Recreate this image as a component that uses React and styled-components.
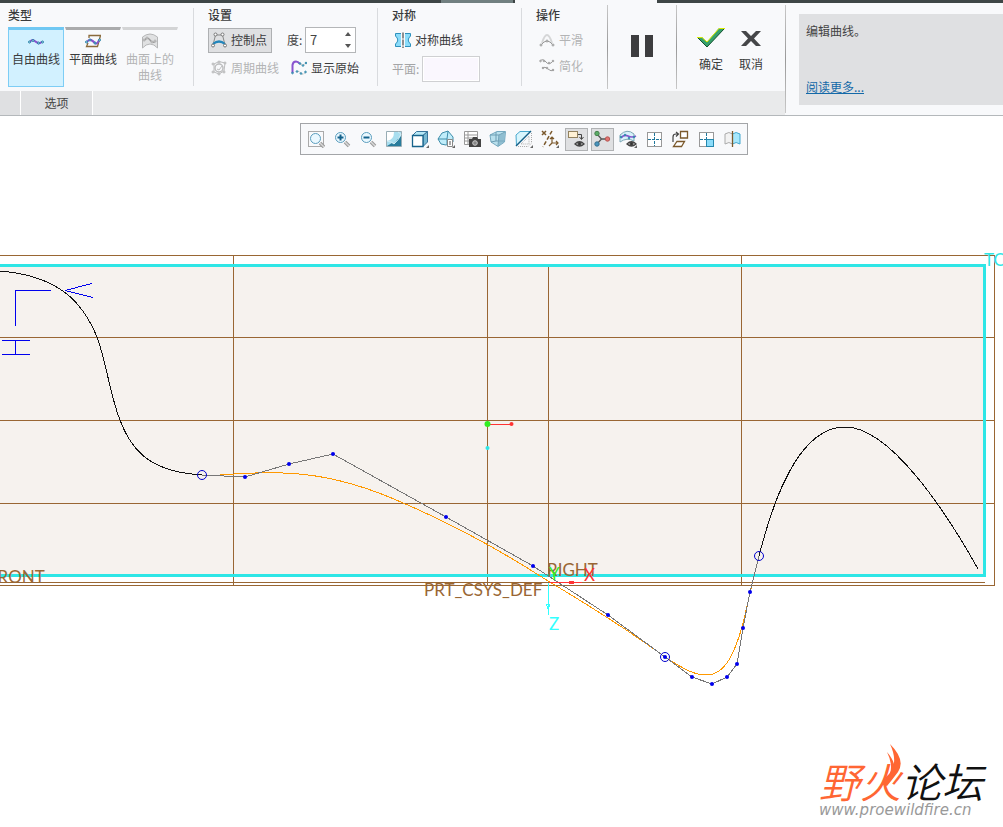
import React from "react";
import styled, { createGlobalStyle } from "styled-components";

const GlobalStyle = createGlobalStyle`
  * {
    box-sizing: border-box;
  }
  body {
    margin: 0;
    background: #fff;
    color: #444;
    font-family: "Noto Sans CJK SC", sans-serif;
    font-size: 12px;
    line-height: 16px;
  }
  button, input {
    font: inherit;
    color: inherit;
  }
`;

const Page = styled.div`
  overflow: hidden;
`;

const Ribbon = styled.header`
  background: #f8f9fb;
  border-bottom: 1px solid #b4b8bb;
`;

const TabStrip = styled.div`
  display: flex;
  height: 3px;
`;

const TabPiece = styled.div`
  flex: ${(p) => (p.$width ? `0 0 ${p.$width}px` : "1")};
  background: ${(p) => p.$color};
`;

const RibbonBody = styled.div`
  display: flex;
`;

const RibbonMain = styled.div`
  flex: none;
`;

const Groups = styled.div`
  display: flex;
  height: 88px;
`;

const Group = styled.section`
  width: ${(p) => p.$width}px;
  padding: 4px 0 0 ${(p) => p.$pad || 14}px;
`;

const Title = styled.h2`
  margin: 0 0 4px;
  font-size: 12px;
  line-height: 16px;
  font-weight: 500;
  color: #3a3b3c;
`;

const Separator = styled.div`
  flex: none;
  width: 1px;
  margin: ${(p) => (p.$strong ? "2px 0" : "5px 0")};
  background: ${(p) =>
    p.$strong ? "linear-gradient(#c8c8c8, #999, #c8c8c8)" : "#d9dbde"};
`;

const TypeList = styled.div`
  display: flex;
  gap: 1px;
`;

const TypeButton = styled.button`
  width: 56px;
  height: 60px;
  padding: 3px 0 0;
  display: flex;
  flex-direction: column;
  align-items: center;
  gap: 2px;
  background: ${(p) => (p.$active ? "#d2f1ff" : "none")};
  border: 1px solid ${(p) => (p.$active ? "#7dcdf5" : "transparent")};
  border-top: 3px solid
    ${(p) => (p.$active ? "#70c8f3" : p.disabled ? "#d3d4d5" : "#aaabac")};
  color: ${(p) => (p.disabled ? "#b3b4b5" : "#3a3b3c")};
  svg {
    flex: none;
  }
`;

const Row = styled.div`
  display: flex;
  align-items: center;
  gap: 4px;
  height: 26px;
  margin-top: ${(p) => p.$top || 0}px;
`;

const Command = styled.button`
  display: flex;
  align-items: center;
  gap: 4px;
  height: 25px;
  padding: 0 4px 0 2px;
  white-space: nowrap;
  background: ${(p) => (p.$active ? "#dfe0e2" : "none")};
  border: 1px solid ${(p) => (p.$active ? "#aeb0b2" : "transparent")};
  color: ${(p) => (p.disabled ? "#b3b4b5" : "#3a3b3c")};
`;

const FieldLabel = styled.label`
  color: ${(p) => (p.$muted ? "#a4a5a6" : "#444")};
  margin-left: ${(p) => p.$left || 0}px;
  width: ${(p) => p.$width}px;
  white-space: nowrap;
`;

const Spinner = styled.div`
  display: flex;
  width: 51px;
  height: 26px;
  background: #fff;
  border: 1px solid #b4b6b8;
`;

const SpinnerInput = styled.input`
  width: 34px;
  padding: 0 4px;
  border: 0;
  background: none;
  font-size: 13px;
`;

const SpinnerArrows = styled.div`
  display: flex;
  flex-direction: column;
  button {
    width: 15px;
    height: 12px;
    padding: 0;
    border: 0;
    background: none;
    display: flex;
    align-items: center;
    justify-content: center;
  }
`;

const PlaneInput = styled.input`
  width: 58px;
  height: 26px;
  border: 1px solid #cfd0d2;
  outline: 1px solid #fff;
  outline-offset: -2px;
  background: #faf7fe;
`;

const PauseButton = styled.button`
  width: 68px;
  padding: 0;
  border: 0;
  background: none;
`;

const Decision = styled.div`
  display: flex;
  width: 108px;
  padding: 21px 0 0 14px;
`;

const DecisionButton = styled.button`
  width: 40px;
  height: 50px;
  padding: 0;
  border: 0;
  background: none;
  display: flex;
  flex-direction: column;
  align-items: center;
  gap: 4px;
  color: #3a3b3c;
`;

const OptionBar = styled.nav`
  display: flex;
  gap: 1px;
  height: 24px;
  background: #e9eaeb;
`;

const OptionTab = styled.button`
  width: ${(p) => p.$width}px;
  padding: 0;
  border: 0;
  background: #dfe0e2;
  box-shadow: 1px 0 #fff;
`;

const Help = styled.aside`
  flex: 1;
  min-width: 0;
  margin: 11px 0 10px 13px;
  padding: 9px 7px 10px;
  display: flex;
  flex-direction: column;
  justify-content: space-between;
  align-items: flex-start;
  background: #dfe0e2;
  p {
    margin: 0;
  }
  a {
    color: #1469a8;
  }
`;

const Workspace = styled.main`
  position: relative;
  padding-top: 7px;
`;

const ViewBar = styled.div`
  display: flex;
  gap: 3px;
  width: max-content;
  height: 32px;
  margin: 0 0 1px 300px;
  padding: 4px 3px 3px 4px;
  border: 1px solid #a3a5a8;
  background: #f8f9fb;
`;

const ViewButton = styled.button`
  width: 23px;
  height: 23px;
  padding: 0 1px 1px 0;
  display: flex;
  align-items: center;
  justify-content: center;
  border: 1px solid ${(p) => (p.$active ? "#b0b2b4" : "transparent")};
  background: ${(p) => (p.$active ? "#dfe0e2" : "none")};
`;

const Sketch = styled.svg`
  display: block;
  width: 100%;
  height: auto;
  shape-rendering: crispEdges;
  fill: none;
  text {
    font-family: Lato, "Open Sans", sans-serif;
    font-size: 17px;
  }
`;

const Watermark = styled.div`
  position: absolute;
  right: 20px;
  bottom: 8px;
`;

const WatermarkName = styled.div`
  display: flex;
  font-size: 41px;
  line-height: 42px;
  font-style: italic;
  font-weight: 350;
  color: #111;
  b {
    font-weight: 350;
    color: #ff6633;
  }
  svg {
    position: absolute;
    top: -17px;
    left: 63px;
  }
`;

const WatermarkSite = styled.div`
  font-family: "DejaVu Sans", sans-serif;
  font-style: italic;
  font-size: 15px;
  line-height: 18px;
  color: #999;
`;

const Glyph = ({ children, w = 16, h = 16, ...rest }) => (
  <svg
    width={w}
    height={h}
    viewBox={`0 0 ${w} ${h}`}
    fill="none"
    stroke="#39749b"
    aria-hidden="true"
    {...rest}
  >
    {children}
  </svg>
);

const Corner = () => <path d="M18 15v3h-3z" fill="#666" stroke="none" />;

const Eye = ({ x, y }) => (
  <g transform={`translate(${x} ${y})`} stroke="#444" strokeWidth="1.3">
    <path d="M0 3Q4.500-1.500 9 3Q4.500 7 0 3Z" fill="#fff" />
    <circle cx="4.500" cy="2.800" r="1.500" fill="#333" />
  </g>
);

const Nodes = ({ points, r = 1.3, color, fill = "#d9f5ff" }) =>
  points.map(([x, y]) => (
    <circle key={`${x}-${y}`} cx={x} cy={y} r={r} fill={fill} stroke={color} />
  ));

const FreeCurve = () => (
  <Glyph>
    <path d="M2 9Q4 6 6 7.500T10 10T14 8.500" stroke="#8a54cf" strokeWidth="2" />
    <Nodes points={[[1.5, 9], [5, 7.5], [10.5, 10], [14.5, 9]]} r={1} color="#187aa0" />
  </Glyph>
);

const PlaneCurve = () => (
  <Glyph>
    <path d="M4 5V2.500H15.500L12.500 13.500H1.500L3 10" stroke="#8a6a3a" strokeWidth="1.300" />
    <path d="M2 9Q4 6 6 7T10 10T14 7" stroke="#8a54cf" strokeWidth="2" />
    <Nodes points={[[1.5, 9], [5, 7], [10, 10], [14.5, 7]]} r={1} color="#187aa0" />
  </Glyph>
);

const SurfaceCurve = () => (
  <Glyph w={18} stroke="#b5b6b7">
    <path d="M1.500 4Q9-2 16.500 4V15Q13 11 9 11T1.500 15Z" fill="#e0e1e2" />
    <path d="M3 8Q6 3 9 7T15 8" stroke="#999" strokeWidth="1.300" />
    <Nodes points={[[3, 7], [6, 5], [11, 9], [14, 8]]} r={1} color="#aaa" fill="#eee" />
  </Glyph>
);

const ControlPoint = () => (
  <Glyph stroke="#888">
    <path d="M2 13L4.500 3H11.500L14 13" />
    <path d="M2 12Q8 7 14 12" stroke="#2386bb" strokeWidth="2.200" />
    <Nodes points={[[2, 13.5], [4.5, 2.5], [11.5, 2.5], [14, 13.5]]} r={1.5} color="#777" fill="#fff" />
  </Glyph>
);

const PeriodicCurve = () => (
  <Glyph stroke="#bcbdbe">
    <path d="M3 4L8 1.500L14 3L13 11L8 14L3 12Z" />
    <circle cx="8" cy="8" r="4" strokeWidth="1.500" />
    <path d="M6 9l2 1 3-4" />
    <Nodes points={[[2, 4], [8, 2], [14, 3], [13, 12], [8, 14], [2, 12]]} r={1} color="#b5b6b7" fill="#eee" />
  </Glyph>
);

const ShowOriginal = () => (
  <Glyph>
    <path d="M1.500 13V5Q2 1.500 5 1.500Q7 1.500 9 4" stroke="#8a54cf" strokeWidth="2" />
    <path d="M9 4Q12 6 15 3M6 12Q8 10 9.500 13T15 12" stroke="#bbb" strokeDasharray="2 1" />
    <Nodes points={[[1.5, 13], [9, 3.5], [12, 5.5], [15, 3], [6, 11.5], [10, 13.5], [14.5, 12]]} r={0.8} color="#187aa0" />
  </Glyph>
);

const Symmetric = () => (
  <Glyph stroke="#2e91bd">
    <path d="M0.500 1.500H6V14.500H0.500V12Q5 8 0.500 4Z" fill="#8bdcfa" stroke="none" />
    <path d="M15.500 1.500H10V14.500H15.500V12Q11 8 15.500 4Z" fill="#8bdcfa" stroke="none" />
    <path d="M6 1.500H0.500V4Q5 8 0.500 12V14.500H6M10 1.500H15.500V4Q11 8 15.500 12V14.500H10" />
    <path d="M8 0.500V16" stroke="#222" strokeDasharray="6 1" />
  </Glyph>
);

const Smooth = () => (
  <Glyph stroke="#bcbdbe">
    <path d="M3 11Q8-5 13 11" stroke="#d5d6d7" strokeWidth="2" />
    <path d="M2 13Q8 5 14 13" stroke="#999" />
    <Nodes points={[[2, 13], [8, 9], [14, 13]]} r={1} color="#999" fill="#eee" />
  </Glyph>
);

const Simplify = () => (
  <Glyph stroke="#999">
    <path d="M1 3Q4 0 7 4T14 3M3 10Q6 8 9 11T15 12" />
    <Nodes points={[[1.5, 3], [5, 3], [10, 5], [14, 3], [4, 10], [8, 10], [14, 12]]} r={0.8} color="#999" fill="#eee" />
  </Glyph>
);

const Magnifier = ({ sign }) => (
  <>
    <path d="M12 12L16 16" stroke="#9a9a9a" strokeWidth="3.500" />
    <path d="M12 12L16 16" stroke="#d9d9d9" strokeWidth="1.500" />
    <circle cx="7.500" cy="7.500" r="5" fill="#eaf8ff" stroke="#5a9dbd" />
    {sign && <path d={sign} stroke="#14628c" strokeWidth="2" />}
  </>
);

const viewTools = [
  {
    name: "重新调整",
    icon: (
      <>
        <rect x="1.500" y="1.500" width="15" height="15" stroke="#aaa" />
        <g transform="translate(1 1)">
          <Magnifier />
        </g>
      </>
    ),
  },
  { name: "放大", icon: <Magnifier sign="M4.500 7.500h6M7.500 4.500v6" /> },
  { name: "缩小", icon: <Magnifier sign="M4.500 7.500h6" /> },
  {
    name: "重画",
    icon: (
      <>
        <path d="M1.500 1.500H16.500V16.500H1.500Z" fill="#a8deef" stroke="#99adb5" />
        <path d="M2 2H9Q9 10 2 11Z" fill="#fff" stroke="none" />
        <path d="M2 16L7 13Q9 15 12 10L16 6V16Z" fill="#287c9c" stroke="none" />
        <path d="M2 11Q8 12 9 14Q14 10 16 4L13 2" stroke="#d3edf5" />
      </>
    ),
  },
  {
    name: "显示样式",
    icon: (
      <>
        <path d="M1.500 5.500L5.500 1.500H16.500L12 5.500Z" fill="#b8e8f6" />
        <path d="M12 5.500L16.500 1.500V12L12 16.500Z" fill="#78b9d2" />
        <path d="M1.500 5.500H12V16.500H1.500Z" fill="#fff" stroke="#17638b" strokeWidth="1.300" />
        <Corner />
      </>
    ),
  },
  {
    name: "已保存方向",
    icon: (
      <>
        <path d="M1 9L5 3L11 1L16 7V12L9 15L4 14Z" fill="#c0edfa" stroke="#3e8daa" />
        <path d="M1 9H10V14M10 9L11 1" fill="none" stroke="#3e8daa" />
        <path d="M10.500 9.500H15.500V16.500H10.500Z" fill="#fff" stroke="#888" />
        <path d="M12 12h2M12 14h2" stroke="#555" />
        <Corner />
      </>
    ),
  },
  {
    name: "视图管理器",
    icon: (
      <>
        <path d="M1.500 1.500H14.500V14.500H1.500ZM1 5H15M1 8H15M1 11H15M5 1V15" stroke="#999" fill="#fff" />
        <path d="M6 9h3l1-2h4l1 2h3v8H6Z" fill="#444" stroke="none" />
        <circle cx="12" cy="13" r="2.300" fill="#888" stroke="#ccc" />
      </>
    ),
  },
  {
    name: "透视图",
    icon: (
      <>
        <path d="M1 5L8 1.500H16.500L15.500 12L9 16.500L2 12Z" fill="#b9e0ed" stroke="#74a9c0" />
        <path d="M1 5H10L9 16M10 5L16 2M7 2V11L2 12M7 11H15" stroke="#6c9db3" />
        <path d="M10 5L16 2L15 12L9 16Z" fill="#7eafc5" stroke="none" opacity="0.700" />
      </>
    ),
  },
  {
    name: "截面",
    icon: (
      <>
        <path d="M1 5L5 1.500H15.500L1.500 15.500Z" fill="#d8f5fd" stroke="#49a8ce" />
        <path d="M16.500 3V13L13 16.500H3M6 14L14 6V14Z" stroke="#aaa" strokeDasharray="1 1" />
        <path d="M1 16L16 1" stroke="#155f85" strokeWidth="1.500" />
        <Corner />
      </>
    ),
  },
  {
    name: "基准显示过滤器",
    icon: (
      <>
        <g stroke="#7b592c" strokeWidth="1.500">
          <path d="M1 1l4 4M5 1L1 5" />
          <path d="M11 1L2 17" strokeDasharray="4 2" />
          <path d="M11 7v6h6M9 9l2-2 2 2M15 11l2 2-2 2M11 13l-3 3" strokeWidth="1.200" />
        </g>
        <Corner />
      </>
    ),
  },
  {
    name: "注释显示",
    active: true,
    icon: (
      <>
        <rect x="1.500" y="1.500" width="9" height="6" fill="#fff1d5" stroke="#93825f" />
        <path d="M11 4.500H14.500V9M12.500 7L14.500 9.500L16.500 7" stroke="#444" />
        <Eye x={8} y={11} />
      </>
    ),
  },
  {
    name: "旋转中心",
    active: true,
    icon: (
      <>
        <path d="M4 4L8.500 9L4 14M8 9H14" stroke="#555" strokeWidth="1.300" />
        <circle cx="4" cy="3.500" r="2.200" fill="#5aac66" stroke="#47814e" />
        <circle cx="4" cy="14" r="2.200" fill="#4894bc" stroke="#35708f" />
        <circle cx="14.500" cy="9" r="2.200" fill="#e17370" stroke="#b65552" />
      </>
    ),
  },
  {
    name: "显示曲线",
    icon: (
      <>
        <path d="M1 5Q8-2 15 4V11Q8 7 1 12Z" fill="#d8f2fb" stroke="#7ea7b5" />
        <path d="M2 8Q5 4 9 6T17 6" stroke="#8a54cf" strokeWidth="1.700" />
        <Nodes points={[[2, 7], [6, 5], [10, 8], [15, 7]]} r={0.8} color="#197da4" />
        <Eye x={8} y={11} />
        <Corner />
      </>
    ),
  },
  {
    name: "四视图",
    icon: (
      <>
        <rect x="2.500" y="2.500" width="14" height="14" fill="#fff" stroke="#999" />
        <path d="M9.500 3V16M3 9.500H16" strokeDasharray="3 1" stroke="#20779c" />
      </>
    ),
  },
  {
    name: "平面方向",
    icon: (
      <>
        <path d="M9.500 1.500H16.500V8H9.500ZM6 11.500H13.500L10.500 16.500H2.500Z" fill="#fff" stroke="#7b592c" strokeWidth="1.300" />
        <path d="M2 12V7Q2 4 5 4H7M5 2L7.500 4L5 6.500" stroke="#444" strokeWidth="1.200" />
      </>
    ),
  },
  {
    name: "活动视图",
    icon: (
      <>
        <rect x="2.500" y="2.500" width="14" height="14" fill="#fff" stroke="#999" />
        <path d="M9.500 3V16M3 9.500H16" strokeDasharray="3 1" stroke="#20779c" />
        <rect x="9.500" y="9.500" width="7" height="7" fill="#8bdcfa" stroke="#2588ae" />
      </>
    ),
  },
  {
    name: "对称显示",
    icon: (
      <>
        <path d="M9.500 4Q6 1 2 4V14Q6 11 9.500 14Z" fill="#f2f2f2" stroke="#aaa" />
        <path d="M9.500 4Q13 1 17 4V14Q13 11 9.500 14Z" fill="#a8e8fc" stroke="#41a8d0" />
        <path d="M9.500 1V17" stroke="#7b592c" strokeWidth="1.300" />
      </>
    ),
  },
];

const controlPolygon = [
  [202, 475], [245, 477], [289, 464], [333, 454], [446, 517], [533, 566],
  [608, 615], [665, 657], [692, 677], [712, 684], [727, 677], [737, 664],
  [743, 628], [750, 592], [759, 556],
];

const endPoints = [[202, 475], [665, 657], [759, 556]];

function ModelSketch() {
  return (
    <Sketch viewBox="0 156 1003 671" role="img" aria-label="TOP 平面上的曲线">
      <rect x="-5" y="265" width="990" height="311" fill="#f6f2ee" />
      <g stroke="#996633">
        <path d="M0 255.500H994.500V585.500H0M0 337.500H994M0 420.500H994M0 503.500H994M0 582.500H985" />
        <path d="M233.500 255V585M487.500 255V585M741.500 255V585M548.500 265V575" />
      </g>
      <rect x="-5" y="265.500" width="989.500" height="310" stroke="#2ee6e6" strokeWidth="3" />
      <path d="M15.500 326V290.500H51M92 283.500L65 290.500L93 297.500M2 340.500H30M2 354.500H30M15.500 340V354" stroke="#0000ee" />
      <g fill="#996633">
        <text x="-12" y="583">FRONT</text>
        <text x="547" y="576">RIGHT</text>
        <text x="424" y="596">PRT_CSYS_DEF</text>
      </g>
      <text x="984" y="266" fill="#2ee6e6">TOP</text>
      <path d="M0 271C60 276 83 303 97 337C107 365 110 395 120 420C133 455 155 472 202 475" stroke="#111" />
      <path d="M759 556C772 505 797 427 845 427C890 427 945 510 978 569" stroke="#111" />
      <path
        d="M220 475C280 470 330 470 403 503C450 523 500 550 548 581C590 606 635 635 665 657C685 670 695 675 706 675C727 675 736 648 742 627C748 604 751 586 759 556"
        stroke="#ff9900"
      />
      <polyline points={controlPolygon.join(" ")} stroke="#777" />
      <path d="M487 424.500H511" stroke="#ff3333" />
      <g shapeRendering="auto">
        <circle cx="487.500" cy="424" r="3" fill="#33ee22" />
        <circle cx="511.500" cy="424" r="2" fill="#ff3333" />
        <circle cx="487.500" cy="448" r="2" fill="#2ee6e6" />
        {controlPolygon.slice(1, -1).map(([x, y]) => (
          <circle key={x} cx={x} cy={y} r="2" fill="#0000ee" />
        ))}
        {endPoints.map(([x, y]) => (
          <circle key={x} cx={x} cy={y} r="4.500" stroke="#0000cc" />
        ))}
      </g>
      <path d="M549 582.500H582M569 581L577 582.500L569 584Z" stroke="#ff3333" />
      <path d="M548.500 583V615M546.500 604L548.500 611L549.500 604Z" stroke="#33ffff" />
      <text x="584" y="581" fill="#ff3333">X</text>
      <text x="549" y="580" fill="#33ee22">Y</text>
      <text x="549" y="630" fill="#33ffff">Z</text>
    </Sketch>
  );
}

function App() {
  return (
    <Page>
      <GlobalStyle />
      <Ribbon>
        <TabStrip>
          <TabPiece $width={441} $color="#3e4646" />
          <TabPiece $width={72} $color="#718080" />
          <TabPiece $width={2} $color="#3e4646" />
          <TabPiece $width={142} $color="#f8f9fb" />
          <TabPiece $color="#3e4646" />
        </TabStrip>
        <RibbonBody>
          <RibbonMain>
            <Groups>
              <Group $width={193} $pad={8}>
                <Title>类型</Title>
                <TypeList>
                  <TypeButton $active>
                    <FreeCurve />
                    自由曲线
                  </TypeButton>
                  <TypeButton>
                    <PlaneCurve />
                    平面曲线
                  </TypeButton>
                  <TypeButton disabled>
                    <SurfaceCurve />
                    <span>
                      曲面上的
                      <br />
                      曲线
                    </span>
                  </TypeButton>
                </TypeList>
              </Group>
              <Separator />
              <Group $width={183}>
                <Title>设置</Title>
                <Row>
                  <Command $active>
                    <ControlPoint />
                    控制点
                  </Command>
                  <FieldLabel htmlFor="degree" $left={11} $width={14}>
                    度:
                  </FieldLabel>
                  <Spinner>
                    <SpinnerInput id="degree" defaultValue="7" />
                    <SpinnerArrows>
                      <button aria-label="增加">
                        <Glyph w={6} h={4} stroke="none">
                          <path d="M0 4L3 0L6 4Z" fill="#555" />
                        </Glyph>
                      </button>
                      <button aria-label="减少">
                        <Glyph w={6} h={4} stroke="none">
                          <path d="M0 0L3 4L6 0Z" fill="#555" />
                        </Glyph>
                      </button>
                    </SpinnerArrows>
                  </Spinner>
                </Row>
                <Row $top={2}>
                  <Command disabled>
                    <PeriodicCurve />
                    周期曲线
                  </Command>
                  <Command>
                    <ShowOriginal />
                    显示原始
                  </Command>
                </Row>
              </Group>
              <Separator />
              <Group $width={143}>
                <Title>对称</Title>
                <Row>
                  <Command>
                    <Symmetric />
                    对称曲线
                  </Command>
                </Row>
                <Row $top={3}>
                  <FieldLabel htmlFor="plane" $muted $width={26}>
                    平面:
                  </FieldLabel>
                  <PlaneInput id="plane" disabled />
                </Row>
              </Group>
              <Separator />
              <Group $width={85}>
                <Title>操作</Title>
                <Row>
                  <Command disabled>
                    <Smooth />
                    平滑
                  </Command>
                </Row>
                <Row>
                  <Command disabled>
                    <Simplify />
                    简化
                  </Command>
                </Row>
              </Group>
              <Separator $strong />
              <PauseButton aria-label="暂停">
                <Glyph w={24} h={22} stroke="none">
                  <path d="M1 0h8v22H1zM15 0h8v22h-8z" fill="#3d3d3f" />
                </Glyph>
              </PauseButton>
              <Separator $strong />
              <Decision>
                <DecisionButton>
                  <Glyph w={28} h={28} stroke="none">
                    <path d="M0 13H5L10 18L22 4H28L10 23Z" fill="#36a06c" />
                    <path d="M1 14L10 23L27 5" stroke="#14512f" />
                    <path d="M0 13.500H5L10 18L22 4.500H28" stroke="#d7e900" />
                  </Glyph>
                  确定
                </DecisionButton>
                <DecisionButton>
                  <Glyph w={28} h={28} stroke="none">
                    <path
                      d="M4 7H9L14 12L19 7H24L17 14.500L24 22H19L14 17L9 22H4L11 14.500Z"
                      fill="#454648"
                    />
                  </Glyph>
                  取消
                </DecisionButton>
              </Decision>
            </Groups>
            <OptionBar>
              <OptionTab $width={20} aria-label="更多" />
              <OptionTab $width={71}>选项</OptionTab>
            </OptionBar>
          </RibbonMain>
          <Separator $strong />
          <Help>
            <p>编辑曲线。</p>
            <a href="#more">阅读更多...</a>
          </Help>
        </RibbonBody>
      </Ribbon>
      <Workspace>
        <ViewBar>
          {viewTools.map((tool) => (
            <ViewButton key={tool.name} $active={tool.active} aria-label={tool.name}>
              <Glyph w={18} h={18}>
                {tool.icon}
              </Glyph>
            </ViewButton>
          ))}
        </ViewBar>
        <ModelSketch />
        <Watermark>
          <WatermarkName>
            <b>野火</b>论坛
            <Glyph w={26} h={46} stroke="none">
              <path d="M8 2Q24 18 16 30Q10 38 5 44Q0 43 4 35Q18 23 8 2Z" fill="#ff6633" />
              <path d="M5 10Q17 24 10 34L5 38Q13 26 5 10Z" fill="#ff6633" />
            </Glyph>
          </WatermarkName>
          <WatermarkSite>www.proewildfire.cn</WatermarkSite>
        </Watermark>
      </Workspace>
    </Page>
  );
}

export default App;
